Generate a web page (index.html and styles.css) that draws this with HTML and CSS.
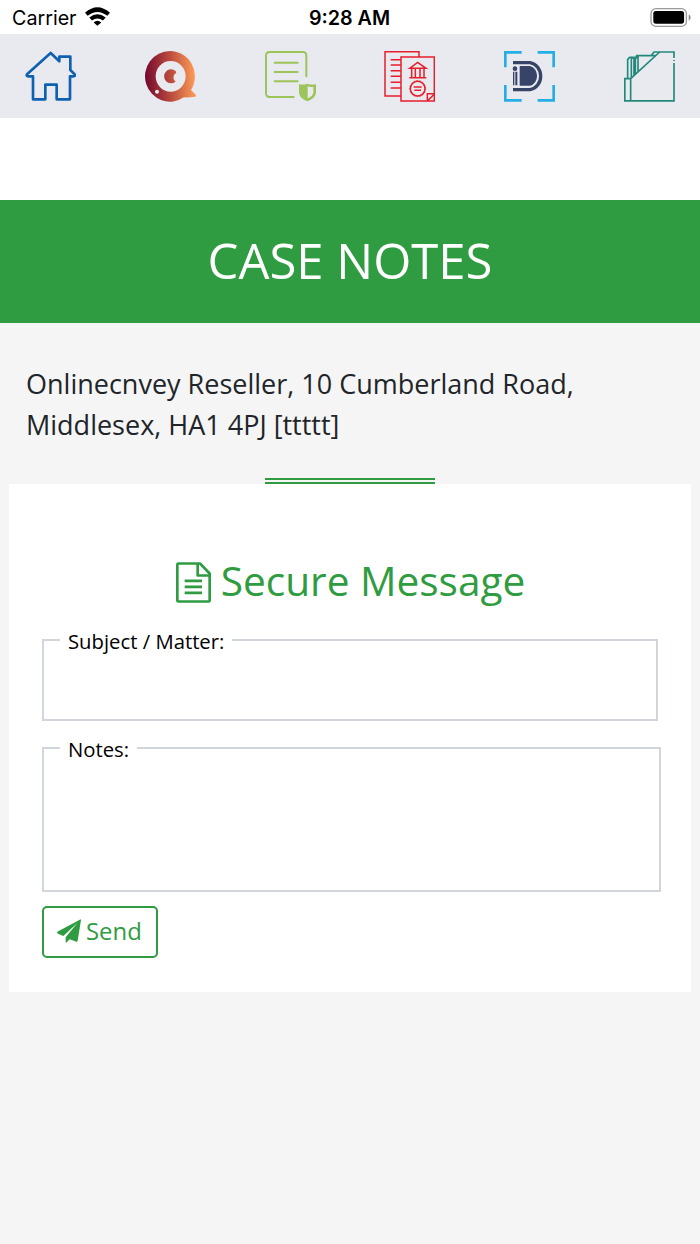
FILE: index.html
```html
<!DOCTYPE html>
<html lang="en">
<head>
<meta charset="UTF-8">
<meta name="viewport" content="width=device-width, initial-scale=1">
<title>Case Notes</title>
<link rel="stylesheet" href="styles.css">
</head>
<body>

<div class="status">
  <div class="carrier">
    <span>Carrier</span>
    <svg class="wifi" viewBox="0 0 75 56">
      <path d="M0 17Q37-16 75 17L67 26Q37 3 8 26Z"/>
      <path d="M13 31Q37 11 62 31L54 40Q37 28 21 40Z"/>
      <path d="M26 46Q37 36 49 46L37 56Z"/>
    </svg>
  </div>
  <div class="time">9:28 AM</div>
  <div class="power">
    <svg class="battery" viewBox="0 0 123 58">
      <rect x="2" y="2" width="108" height="54" rx="15" fill="none" stroke="#999" stroke-width="4"/>
      <rect x="9" y="9" width="94" height="39" rx="8"/>
      <path d="M117 19Q123 23 123 29T117 39Z" fill="#888"/>
    </svg>
  </div>
</div>

<nav class="menu">
  <a class="menu-item" href="#" aria-label="Home">
    <svg viewBox="0 0 153 153" fill="none" stroke="#0f60b0" stroke-width="8" stroke-linejoin="round">
      <path d="M77 6L103 31V17H136V57L150 71Q151 76 145 76H135V145H95V101H61V145H24V76H10Q3 75 6 70Z"/>
    </svg>
  </a>
  <a class="menu-item" href="#" aria-label="Quotes">
    <svg viewBox="0 0 153 153">
      <defs>
        <linearGradient id="flame" gradientUnits="userSpaceOnUse" x1="0" y1="76" x2="150" y2="70">
          <stop offset="0" stop-color="#74082e"/>
          <stop offset=".5" stop-color="#b94a3d"/>
          <stop offset="1" stop-color="#fd9c58"/>
        </linearGradient>
      </defs>
      <path fill="url(#flame)" fill-rule="evenodd" d="M75 0A75 76 0 0 1 138 117L152 131Q156 137 146 138Q130 140 117 139A75 76 0 1 1 75 0ZM77 30A45 46 0 1 0 77 122A45 46 0 1 0 77 30Z"/>
      <path fill="url(#flame)" d="M92 60A21 21 0 1 0 92 92Q84 86 86 76Q87 69 94 66Z"/>
      <circle cx="36" cy="122" r="6" fill="#e9eaf0"/>
    </svg>
  </a>
  <a class="menu-item" href="#" aria-label="Protocol">
    <svg viewBox="0 0 153 153" fill="none" stroke="#9dc45b" stroke-width="6" stroke-linecap="round">
      <path d="M124 76V14Q124 3 113 3H14Q3 3 3 14V127Q3 138 14 138H86M29 35H98M29 63H98M29 91H98"/>
      <path fill="#9dc45b" stroke="none" d="M102 100Q117 102 127 98Q137 102 153 100V126Q150 143 127 151Q105 143 102 126Z"/>
      <path fill="#e9eaf0" stroke="none" d="M128 106Q136 109 145 107V125Q143 136 128 142Z"/>
    </svg>
  </a>
  <a class="menu-item" href="#" aria-label="Documents">
    <svg viewBox="0 0 153 153" fill="none" stroke="#e71e2b" stroke-width="4.5">
      <path d="M51 135H3V2H105V18M51 18H151V150H51ZM20 26H51M20 42H51M20 59H51M20 76H51M20 94H51M20 111H51"/>
      <path d="M77 52L101 34L126 52ZM76 80H127M83 53V80M94 53V80M108 53V80M120 53V80"/>
      <circle cx="101" cy="113" r="22"/>
      <circle cx="101" cy="113" r="24" stroke-width="2" stroke-dasharray="5 4"/>
      <path d="M89 108H113M91 118H111M130 150V128H152M130 150L152 128"/>
    </svg>
  </a>
  <a class="menu-item" href="#" aria-label="Identity">
    <svg viewBox="0 0 153 153" fill="none" stroke="#23aee5" stroke-width="8">
      <path d="M4 49V4H53M101 4H149V49M4 102V148H53M101 148H149V102"/>
      <path stroke="#374467" stroke-width="10" d="M27 35H78A38 41 0 0 1 78 116H27"/>
      <path fill="#374467" stroke="none" d="M47 45H78A26 30 0 0 1 78 104H47ZM27 62H31V103H27ZM34 62H40V103H34Z"/>
      <circle cx="33" cy="53" r="7" fill="#374467" stroke="none"/>
    </svg>
  </a>
  <a class="menu-item" href="#" aria-label="Files">
    <svg viewBox="0 0 153 153" fill="none" stroke="#22897a" stroke-width="5">
      <path d="M2.5 83H20V149.500H2.500ZM20 83L107 3H150V21M150 27V30M150 36V149.500H20"/>
      <path d="M11 83V25L17 19H30V73M22 80V24L27 19M30 30L38 14H95M34 70V24L40 15M42 62V14M83 12L90 3H107"/>
    </svg>
  </a>
</nav>

<header class="banner">
  <h1>CASE NOTES</h1>
</header>

<main>
  <p class="address">Onlinecnvey Reseller, 10 Cumberland Road, Middlesex, HA1 4PJ [ttttt]</p>
  <div class="divider"></div>

  <form class="card">
    <h2>
      <svg class="file-icon" viewBox="0 0 105 122" fill="none" stroke="#2f9c41" stroke-width="8" stroke-linejoin="round">
        <path d="M7 4H72L101 34V115Q101 118 98 118H7Q4 118 4 115V7Q4 4 7 4Z"/>
        <path d="M65 4V40H101M26 56H78M26 74H78M26 92H78"/>
      </svg>
      <span>Secure Message</span>
    </h2>
    <fieldset class="subject">
      <legend>Subject / Matter:</legend>
    </fieldset>
    <fieldset class="notes">
      <legend>Notes:</legend>
    </fieldset>
    <button class="send" type="button">
      <svg class="plane" viewBox="0 0 72 70">
        <path d="M71 0L1 37Q-1 41 3 43L19 50L61 11L26 54V69Q28 71 30 68L38 60L58 67Q61 68 62 64L72 2Z"/>
      </svg>
      <span>Send</span>
    </button>
  </form>
</main>

</body>
</html>
```
FILE: styles.css
```css
* { box-sizing: border-box; }
body {
  margin: 0;
  background: #f5f5f5;
  color: #212529;
  font: 27px/40.6px "Open Sans", "Noto Sans", sans-serif;
}
svg { display: block; }

.status {
  display: grid;
  grid-template-columns: 1fr auto 1fr;
  align-items: center;
  height: 34px;
  padding: 0 9px 0 12px;
  background: #fff;
  color: #000;
  font: 19.7px/34px Inter, sans-serif;
}
.carrier { display: flex; align-items: center; gap: 8px; }
.wifi { width: 25px; height: 19px; margin-top: -2px; }
.time { margin-left: -4px; font-weight: 600; padding-top: 1px; }
.power { display: flex; justify-content: flex-end; }
.battery { width: 41px; height: 19px; margin-top: -1px; }

.menu {
  display: flex;
  justify-content: space-between;
  align-items: center;
  height: 84px;
  padding: 0 25px;
  background: #e9eaf0;
}
.menu-item svg { width: 51px; height: 51px; }

.banner {
  height: 205px;
  padding-top: 24px;
  border-top: 82px solid #fff;
  background: #2f9c41;
  color: #fff;
  text-align: center;
}
h1 { margin: 0; font-size: 49px; font-weight: 400; line-height: 72px; }

.address { margin: 0; padding: 41px 26px 33px; }
.divider {
  width: 170px;
  height: 6px;
  margin: 0 auto;
  border: solid #2f9c41;
  border-width: 2px 0;
}

.card {
  height: 508px;
  margin: 0 9px;
  padding: 69px 32px 0 33px;
  background: #fff;
}
h2 {
  display: flex;
  justify-content: center;
  gap: 10px;
  margin: 0;
  color: #2f9c41;
  font-size: 40.6px;
  font-weight: 400;
  line-height: 56px;
}
.file-icon { width: 35px; height: 41px; margin-top: 9px; }

fieldset {
  margin: 0;
  padding: 0 0 0 16px;
  border: 2px solid #d1d6dc;
}
legend {
  padding: 2px 8px 0;
  color: #000;
  font-size: 20.3px;
  line-height: 28px;
}
.subject { width: 616px; height: 96px; margin-top: 16px; }
.notes { width: 619px; height: 159px; margin-top: 12px; }

.send {
  display: flex;
  align-items: center;
  gap: 5px;
  width: 116px;
  height: 52px;
  margin-top: 14px;
  padding: 0 13px 2px;
  border: 2px solid #2f9c41;
  border-radius: 5px;
  background: #fff;
  color: #2f9c41;
  font: 23.9px/36px "Open Sans", "Noto Sans", sans-serif;
}
.plane { width: 24px; height: 24px; fill: #2f9c41; }
```
